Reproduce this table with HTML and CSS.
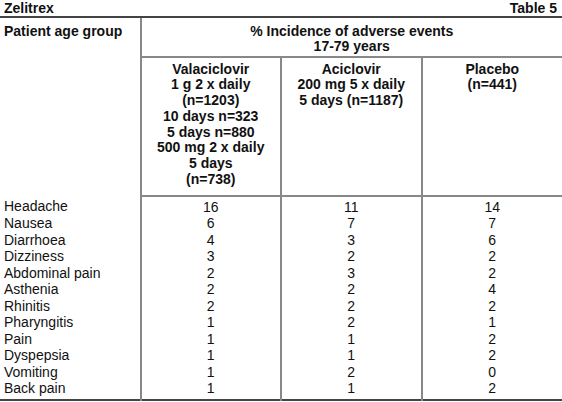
FILE: index.html
```html
<!DOCTYPE html>
<html lang="en">
<head>
  <meta charset="UTF-8">
  <meta name="viewport" content="width=device-width, initial-scale=1.0">
  <title>Zelitrex - Table 5</title>
  <link rel="stylesheet" href="styles.css">
</head>
<body>
  <main class='sheet'>
    <div class='caption'>
      <span>Zelitrex</span>
      <span>Table 5</span>
    </div>
    <table class='events'>
      <colgroup>
        <col class='col_label'>
        <col class='col_drug'>
        <col class='col_drug'>
        <col class='col_drug'>
      </colgroup>
      <thead>
        <tr>
          <th class='group' rowspan='2'>Patient age group</th>
          <th class='incidence' colspan='3'>% Incidence of adverse events<br>17-79 years</th>
        </tr>
        <tr class='drugs'>
          <th>Valaciclovir<br>1 g 2 x daily<br>(n=1203)<br>10 days n=323<br>5 days n=880<br>500 mg 2 x daily<br>5 days<br>(n=738)</th>
          <th>Aciclovir<br>200 mg 5 x daily<br>5 days (n=1187)</th>
          <th>Placebo<br>(n=441)</th>
        </tr>
      </thead>
      <tbody></tbody>
    </table>
  </main>

  <script>
    const rows = [
      ['Headache', 16, 11, 14],
      ['Nausea', 6, 7, 7],
      ['Diarrhoea', 4, 3, 6],
      ['Dizziness', 3, 2, 2],
      ['Abdominal pain', 2, 3, 2],
      ['Asthenia', 2, 2, 4],
      ['Rhinitis', 2, 2, 2],
      ['Pharyngitis', 1, 2, 1],
      ['Pain', 1, 1, 2],
      ['Dyspepsia', 1, 1, 2],
      ['Vomiting', 1, 2, 0],
      ['Back pain', 1, 1, 2]
    ];

    let tbody = document.querySelector('.events tbody');

    rows.forEach(row => {
      let tr = document.createElement('tr');
      row.forEach((value, i) => {
        let td = document.createElement('td');
        td.textContent = value;
        if (i > 0) td.classList.add('num');
        tr.appendChild(td);
      });
      tbody.appendChild(tr);
    });
  </script>
</body>
</html>
```

FILE: styles.css
```css
html {
  background-color: #fff;
}
body {
  margin: 0;
  color: #111;
  font-family: "Liberation Sans", Arial, sans-serif;
  font-size: 14px;
}
.sheet {
  width: 562px;
}
.caption {
  display: flex;
  justify-content: space-between;
  height: 16px;
  padding: 0 5px 0 4px;
  line-height: 16px;
  font-weight: bold;
  border-bottom: 2px solid #444;
}
.events {
  width: 562px;
  table-layout: fixed;
  border-collapse: collapse;
  border-bottom: 2px solid #444;
}
.col_label,
.col_drug {
  width: 140px;
}
.events th {
  font-weight: bold;
  vertical-align: top;
  line-height: 15.5px;
  padding: 0;
}
th.group {
  text-align: left;
  padding: 5.5px 4px 0;
  border-right: 2px solid #888;
}
th.incidence {
  text-align: center;
  padding: 5.5px 0 1.5px;
  border-bottom: 2px solid #888;
}
.drugs th {
  text-align: center;
  line-height: 15.8px;
  padding: 3.5px 0 7px;
  border-right: 2px solid #888;
  border-bottom: 2px solid #888;
}
.drugs th:last-child {
  border-right: none;
}
.events td {
  line-height: 16.5px;
  padding: 0 4px;
  border-right: 2px solid #888;
}
.events td:last-child {
  border-right: none;
}
.events td.num {
  text-align: center;
}
.events tbody tr:first-child td {
  padding-top: 2px;
}
.events tbody tr:last-child td {
  padding-bottom: 2px;
}
```
